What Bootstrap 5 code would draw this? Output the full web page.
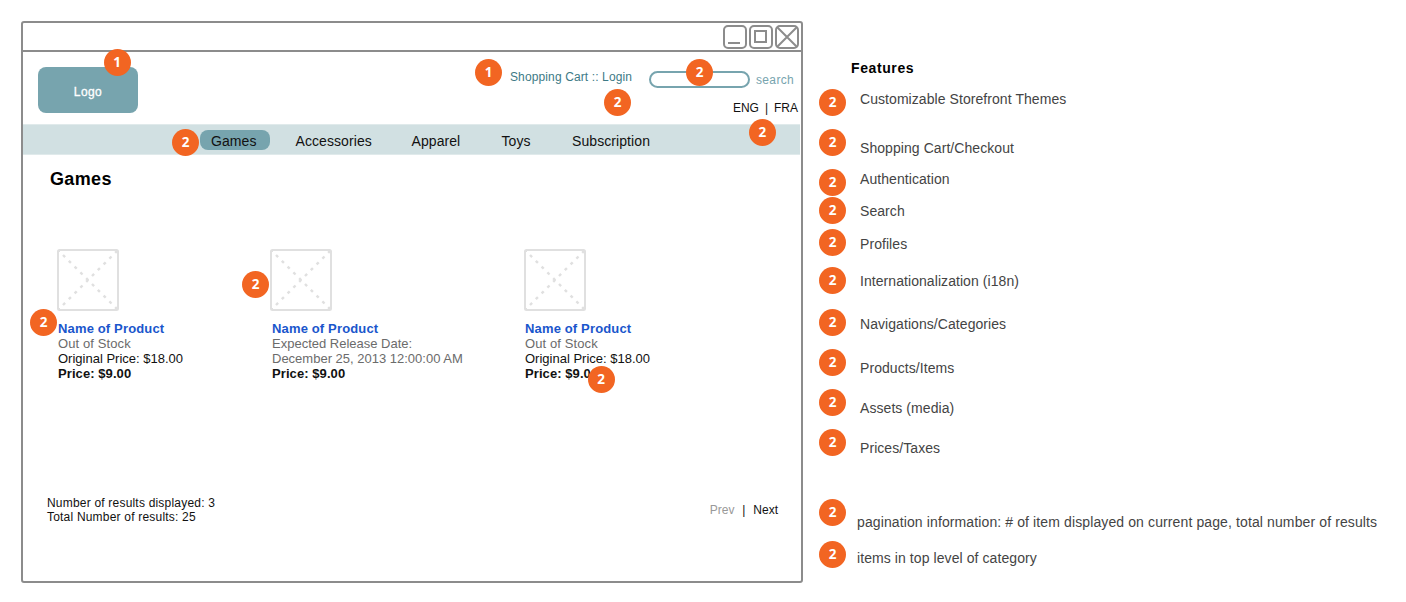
<!DOCTYPE html>
<html lang="en">
<head>
<meta charset="utf-8">
<title>Storefront wireframe</title>
<meta name="viewport" content="width=device-width, initial-scale=1">
<link rel="stylesheet" href="https://cdn.jsdelivr.net/npm/bootstrap@5.3.0/dist/css/bootstrap.min.css">
<style>
  body { font-family: "Liberation Sans", Arial, sans-serif; font-size: 12px; line-height: 14px; color: #111; background: #fff; width: 1406px; height: 602px; overflow: hidden; }
  .app-window { width: 782px; height: 562px; margin: 21px 0 0 21px; border: 2px solid #8c8c8c; border-radius: 3px; }
  .title-strip { height: 29px; border-bottom: 2px solid #8c8c8c; padding: 2px 2px 0 0; gap: 2px; }
  .title-strip svg { width: 24px; height: 24px; fill: none; stroke: #8c8c8c; stroke-width: 2; }

  /* numbered callouts */
  .pin { width: 27px; height: 27px; border-radius: 50%; background: #f26522; color: #fff; font: 700 13.5px/26px "Open Sans", sans-serif; letter-spacing: 0; -webkit-text-stroke: 0; text-align: center; flex: none; }
  .pin-logo { left: 65.5px; top: -18px; }
  .pin-cart { left: -35px; top: -11px; }
  .pin-login { left: 94px; top: 19px; }
  .pin-search { left: 35px; top: -14px; }
  .pin-lang { left: 16px; top: 18px; }
  .pin-nav { left: -28px; top: -1px; }
  .pin-name { left: -27px; top: 60px; }
  .pin-thumb { left: -28px; top: 22px; }
  .pin-price { left: 63.5px; top: 117px; }

  .store-head { height: 72px; padding: 15px 3px 0 15px; }
  .logo-box { width: 100px; height: 46px; border-radius: 8px; background: #77a4ae; color: #fff; letter-spacing: .4px; padding-top: 3px; -webkit-text-stroke: .3px #fff; }
  .head-links { color: #3d7a86; margin-top: 3px; letter-spacing: .12px; width: 139px; }
  .search-box { width: 101px; height: 17px; border: 2px solid #77a4ae; border-radius: 8.5px; margin-top: 4px; }
  .search-label { color: #77a4ae; letter-spacing: .35px; margin: 6px 0 0 6px; width: 42px; }
  .lang { margin-top: 13px; white-space: pre; text-align: right; word-spacing: -.35px; }

  .store-nav { height: 31px; background: #d1e0e2; border: solid #e0eaeb; border-width: 1px 0; margin-right: 1px; padding: 5px 0 0 177px; font-size: 14px; line-height: 22px; letter-spacing: .08px; }
  .store-nav .tab { flex: none; }
  .tab-on { width: 70px; height: 20px; border-radius: 8px; background: #77a4ae; padding-left: 11px; margin-right: 25.5px; }
  .tab-accessories { width: 116px; } .tab-apparel { width: 90px; } .tab-toys { width: 70.5px; }

  .page-title { font-size: 18px; font-weight: 700; line-height: 22px; letter-spacing: .35px; color: #000; margin: 13px 0 0 27px; }
  .catalog { display: grid; grid-template-columns: 213px 254px 1fr; margin: 59px 0 0 34px; font-size: 13px; line-height: 15px; height: 247px; }
  .thumb { display: block; width: 62px; height: 62px; margin-bottom: 10px; }
  .item-text { padding-left: 1px; }
  .item-two .item-text { padding-left: 2px; }
  .item-name { color: #1a56cc; letter-spacing: .15px; }
  .item-note { color: #6b6b6b; }
  .item-stock { letter-spacing: .1px; }
  .item-price { letter-spacing: .08px; }
  .results { padding: 0 23px 0 24px; letter-spacing: .2px; }
  .pager { margin-top: 7px; white-space: pre; letter-spacing: 0; word-spacing: -.7px; }
  .pager-off { color: #999; }

  .legend { margin: 59px 0 0 16px; font-size: 14px; color: #444; letter-spacing: .065px; }
  .legend h2 { font-size: 14px; line-height: 18px; font-weight: 700; color: #000; letter-spacing: .6px; margin: 0 0 12px 32px; }
  .legend li { height: 27px; display: flex; gap: 14px; line-height: 27px; margin-bottom: 13px; white-space: nowrap; }
  .legend .up { margin-top: -3px; } .legend .low { margin-top: 6px; } .legend .mid { margin-top: 2px; }
  .legend li.g0 { margin-bottom: 0; } .legend li.g5 { margin-bottom: 6px; } .legend li.g11 { margin-bottom: 10px; }
  .legend li.g15 { margin-bottom: 16px; } .legend li.g43 { margin-bottom: 43px; } .legend li.g14 { margin-bottom: 15px; }
  .legend .half { margin-top: .5px; }
  .legend .wide { margin: 10px 0 0 -3px; letter-spacing: .115px; } .legend .wide2 { margin: 4px 0 0 -3px; letter-spacing: .08px; }
</style>
</head>
<body class="d-flex align-items-start">
<svg class="d-none">
  <symbol id="picture" viewBox="0 0 62 62">
    <rect x="1" y="1" width="60" height="60" rx="1.5" fill="#fff" stroke="#e0e0e0" stroke-width="2"/>
    <path d="M1 4 4 1M58 1l3 3M1 58l3 3M58 61l3-3" stroke="#e0e0e0"/>
    <path d="M6 6 61 61M6 56 61 1" fill="none" stroke="#e0e0e0" stroke-width="2.4" stroke-dasharray="3 5.2"/>
  </symbol>
</svg>

<main class="app-window flex-shrink-0">
  <div class="title-strip d-flex justify-content-end">
    <svg viewBox="0 0 24 24"><rect x="1" y="1" width="22" height="22" rx="4"/><path d="M5 18h12"/></svg>
    <svg viewBox="0 0 24 24"><rect x="1" y="1" width="22" height="22" rx="4"/><rect x="6" y="6" width="11" height="11"/></svg>
    <svg viewBox="0 0 24 24"><rect x="1" y="1" width="22" height="22" rx="4"/><path d="M2 2 22 22M22 2 2 22"/></svg>
  </div>

  <header class="store-head d-flex">
    <div class="logo-box position-relative d-flex align-items-center justify-content-center me-auto">Logo
      <span class="pin pin-logo position-absolute">1</span>
    </div>
    <div>
      <div class="d-flex">
        <div class="head-links position-relative">Shopping Cart :: Login
          <span class="pin pin-cart position-absolute">1</span>
          <span class="pin pin-login position-absolute">2</span>
        </div>
        <div class="search-box position-relative"><span class="pin pin-search position-absolute">2</span></div>
        <div class="search-label">search</div>
      </div>
      <div class="d-flex justify-content-end">
        <div class="lang position-relative">ENG&nbsp; |&nbsp; FRA<span class="pin pin-lang position-absolute">2</span></div>
      </div>
    </div>
  </header>

  <nav class="store-nav d-flex">
    <div class="tab tab-on position-relative">Games<span class="pin pin-nav position-absolute">2</span></div>
    <div class="tab tab-accessories">Accessories</div>
    <div class="tab tab-apparel">Apparel</div>
    <div class="tab tab-toys">Toys</div>
    <div class="tab">Subscription</div>
  </nav>

  <h1 class="page-title">Games</h1>

  <section class="catalog">
    <article class="position-relative">
      <svg class="thumb"><use href="#picture"/></svg>
      <div class="item-text"><div class="item-name fw-bold">Name of Product</div><div class="item-note item-stock">Out of Stock</div><div>Original Price: $18.00</div><div class="item-price fw-bold">Price: $9.00</div></div>
      <span class="pin pin-name position-absolute">2</span>
    </article>
    <article class="item-two position-relative">
      <svg class="thumb"><use href="#picture"/></svg>
      <div class="item-text"><div class="item-name fw-bold">Name of Product</div><div class="item-note">Expected Release Date:</div><div class="item-note">December 25, 2013 12:00:00 AM</div><div class="item-price fw-bold">Price: $9.00</div></div>
      <span class="pin pin-thumb position-absolute">2</span>
    </article>
    <article class="position-relative">
      <svg class="thumb"><use href="#picture"/></svg>
      <div class="item-text"><div class="item-name fw-bold">Name of Product</div><div class="item-note item-stock">Out of Stock</div><div>Original Price: $18.00</div><div class="item-price fw-bold">Price: $9.00</div></div>
      <span class="pin pin-price position-absolute">2</span>
    </article>
  </section>

  <footer class="results d-flex justify-content-between">
    <div>Number of results displayed: 3<br>Total Number of results: 25</div>
    <div class="pager"><span class="pager-off">Prev</span>&nbsp; &nbsp;|&nbsp; &nbsp;Next</div>
  </footer>
</main>

<aside class="legend">
  <h2>Features</h2>
  <ul class="list-unstyled m-0">
    <li><span class="pin">2</span><span class="up">Customizable Storefront Themes</span></li>
    <li><span class="pin">2</span><span class="low">Shopping Cart/Checkout</span></li>
    <li class="g0"><span class="pin">2</span><span class="up">Authentication</span></li>
    <li class="g5"><span class="pin half">2</span><span class="mid">Search</span></li>
    <li class="g11"><span class="pin">2</span><span class="mid">Profiles</span></li>
    <li class="g15"><span class="pin half">2</span><span class="mid">Internationalization (i18n)</span></li>
    <li><span class="pin">2</span><span class="mid">Navigations/Categories</span></li>
    <li><span class="pin">2</span><span class="low">Products/Items</span></li>
    <li><span class="pin">2</span><span class="low">Assets (media)</span></li>
    <li class="g43"><span class="pin">2</span><span class="low">Prices/Taxes</span></li>
    <li class="g14"><span class="pin">2</span><span class="wide">pagination information: # of item displayed on current page, total number of results</span></li>
    <li><span class="pin">2</span><span class="wide2">items in top level of category</span></li>
  </ul>
</aside>
<script src="https://cdn.jsdelivr.net/npm/bootstrap@5.3.0/dist/js/bootstrap.bundle.min.js"></script>
</body>
</html>
